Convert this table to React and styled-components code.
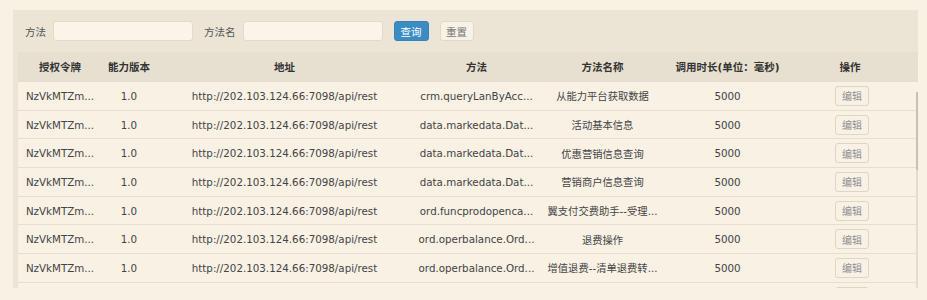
import React from 'react';
import styled, { createGlobalStyle } from 'styled-components';

const GlobalStyle = createGlobalStyle`
  html, body {
    margin: 0;
    padding: 0;
    background: #f8f1e4;
  }
  body {
    font-family: "DejaVu Sans", "Noto Sans CJK SC", sans-serif;
    font-size: 10.3px;
    color: #444;
  }
`;

const rows = [
  { method: 'crm.queryLanByAcc...', name: '从能力平台获取数据' },
  { method: 'data.markedata.Dat...', name: '活动基本信息' },
  { method: 'data.markedata.Dat...', name: '优惠营销信息查询' },
  { method: 'data.markedata.Dat...', name: '营销商户信息查询' },
  { method: 'ord.funcprodopenca...', name: '翼支付交费助手--受理...' },
  { method: 'ord.operbalance.Ord...', name: '退费操作' },
  { method: 'ord.operbalance.Ord...', name: '增值退费--清单退费转...' },
  { method: 'ord.operbalance.Ord...', name: '增值退费查询' },
];

const columns = [
  { title: '授权令牌', width: 84 },
  { title: '能力版本', width: 54 },
  { title: '地址', width: 257 },
  { title: '方法', width: 127 },
  { title: '方法名称', width: 125 },
  { title: '调用时长(单位：毫秒)', width: 125 },
  { title: '操作' },
];

const Page = styled.div`
  padding: 10px 9px 0 13px;
`;

const Panel = styled.div`
  background: #ece5d6;
`;

const Toolbar = styled.div`
  display: flex;
  align-items: center;
  height: 42px;
  padding: 0 12px;
`;

const Label = styled.label`
  font-size: 10.5px;
  color: #555;
  margin-right: 7px;
`;

const Input = styled.input`
  width: 140px;
  height: 20px;
  box-sizing: border-box;
  border: 1px solid #e2dacb;
  border-radius: 3px;
  background: #faf4e9;
  margin: 0 11px 0 0;
  outline: none;
`;

const Button = styled.button`
  height: 20px;
  width: ${p => (p.$primary ? '35px' : '34px')};
  padding: 0;
  font-family: inherit;
  font-size: 10.5px;
  border-radius: 3px;
  cursor: pointer;
  margin-right: ${p => (p.$primary ? '11px' : '0')};
  border: 1px solid ${p => (p.$primary ? '#3583b8' : '#e0d8c9')};
  background: ${p => (p.$primary ? '#3b8cc2' : '#f7f1e6')};
  color: ${p => (p.$primary ? '#fff' : '#777')};
`;

const Body = styled.div`
  position: relative;
  height: 236px;
  overflow: hidden;
  padding-left: 5px;
`;

const Table = styled.table`
  width: 100%;
  table-layout: fixed;
  border-collapse: collapse;
  background: #f8f1e4;
`;

const HeadCell = styled.th`
  height: 29px;
  padding: 0 6px;
  background: #e7e0d0;
  color: #333;
  font-weight: bold;
  font-size: 10.5px;
  text-align: center;
  white-space: nowrap;
  &:last-child {
    padding-right: 14px;
  }
`;

const Row = styled.tr`
  border-top: 1px solid #e6dfcf;
`;

const Cell = styled.td`
  height: 27.7px;
  padding: 0 4px;
  text-align: center;
  white-space: nowrap;
  overflow: hidden;
  font-size: 10.3px;
  color: #444;
  &:last-child {
    padding-right: 8px;
  }
`;

const EditButton = styled.button`
  height: 20px;
  width: 34px;
  padding: 0;
  font-family: inherit;
  font-size: 10px;
  color: #8f8f8f;
  background: #f7f1e6;
  border: 1px solid #ddd5c5;
  border-radius: 3px;
  vertical-align: middle;
`;

// thin scrollbar drawn over the right edge of the list
const ScrollTrack = styled.div`
  position: absolute;
  right: 0;
  top: 40px;
  bottom: 0;
  width: 2px;
  background: #e4ddcd;
`;

const ScrollThumb = styled.div`
  position: absolute;
  right: 0;
  top: 40px;
  height: 78px;
  width: 2px;
  background: #c9c1b1;
`;

export default function App() {
  return (
    <Page>
      <GlobalStyle />
      <Panel>
        <Toolbar>
          <Label>方法</Label>
          <Input />
          <Label>方法名</Label>
          <Input />
          <Button $primary>查询</Button>
          <Button>重置</Button>
        </Toolbar>
        <Body>
          <Table>
            <colgroup>
              {columns.map(c => (
                <col key={c.title} style={c.width ? { width: c.width } : undefined} />
              ))}
            </colgroup>
            <thead>
              <tr>
                {columns.map(c => (
                  <HeadCell key={c.title}>{c.title}</HeadCell>
                ))}
              </tr>
            </thead>
            <tbody>
              {rows.map((r, i) => (
                <Row key={i}>
                  <Cell>NzVkMTZm...</Cell>
                  <Cell>1.0</Cell>
                  <Cell>http://202.103.124.66:7098/api/rest</Cell>
                  <Cell>{r.method}</Cell>
                  <Cell>{r.name}</Cell>
                  <Cell>5000</Cell>
                  <Cell>
                    <EditButton>编辑</EditButton>
                  </Cell>
                </Row>
              ))}
            </tbody>
          </Table>
          <ScrollTrack />
          <ScrollThumb />
        </Body>
      </Panel>
    </Page>
  );
}
